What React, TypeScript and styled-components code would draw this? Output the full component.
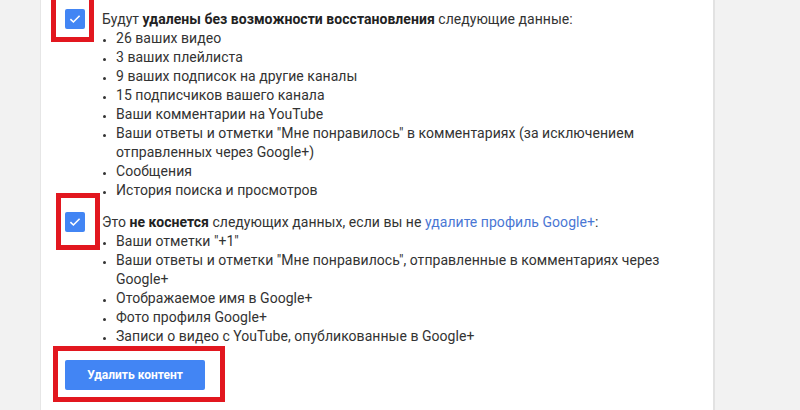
import React from "react";
import styled, { createGlobalStyle } from "styled-components";

const GlobalStyle = createGlobalStyle`
  html, body {
    margin: 0;
    padding: 0;
    background: #f2f2f2;
  }
  body {
    font-family: Roboto, "Noto Sans", Arial, sans-serif;
    overflow: hidden;
  }
`;

const Card = styled.div`
  margin-left: 40px;
  width: 675px;
  min-height: 410px;
  box-sizing: border-box;
  background: #ffffff;
  border-left: 1px solid #e6e6e6;
  border-right: 2px solid #e2e2e2;
  padding: 10px 25px 0 24px;
`;

const Section = styled.div<{ $gap?: number }>`
  display: flex;
  align-items: flex-start;
  gap: 17px;
  margin-top: ${(p) => p.$gap ?? 0}px;
`;

const CheckCell = styled.div`
  position: relative;
  flex: 0 0 20px;
  height: 20px;
  margin-top: -1px;
`;

const Checkbox = styled.div`
  width: 20px;
  height: 20px;
  border-radius: 2px;
  background: #4285f4;
  display: flex;
  align-items: center;
  justify-content: center;
`;

const Highlight = styled.div<{ $top: number; $left: number; $w: number; $h: number }>`
  position: absolute;
  top: ${(p) => p.$top}px;
  left: ${(p) => p.$left}px;
  width: ${(p) => p.$w}px;
  height: ${(p) => p.$h}px;
  box-sizing: border-box;
  border: 5px solid #e2171f;
  pointer-events: none;
`;

const Body = styled.div`
  flex: 1;
  font-size: 14px;
  line-height: 19px;
  letter-spacing: 0.04px;
  color: #333333;
`;

const Lead = styled.div`
  b {
    font-weight: 700;
    color: #222222;
  }
`;

const Link = styled.a`
  color: #4a77d4;
  text-decoration: none;
`;

const List = styled.ul`
  margin: 0;
  padding-left: 14px;
  list-style: disc;
  li::marker {
    font-size: 11px;
  }
`;

const ButtonWrap = styled.div`
  position: relative;
  margin-top: 14px;
  width: 140px;
`;

const Button = styled.button`
  width: 140px;
  height: 30px;
  border: none;
  border-radius: 2px;
  background: #4285f4;
  color: #ffffff;
  font-family: Roboto, Arial, sans-serif;
  font-size: 12px;
  font-weight: 700;
  cursor: pointer;
`;

const Check = () => (
  <Checkbox>
    <svg width="14" height="14" viewBox="0 0 14 14">
      <path d="M2.4 7.2 L5.4 10 L11.6 3.8" fill="none" stroke="#ffffff" strokeWidth="1.6" />
    </svg>
  </Checkbox>
);

const removed = [
  "26 ваших видео",
  "3 ваших плейлиста",
  "9 ваших подписок на другие каналы",
  "15 подписчиков вашего канала",
  "Ваши комментарии на YouTube",
  "Ваши ответы и отметки \"Мне понравилось\" в комментариях (за исключением отправленных через Google+)",
  "Сообщения",
  "История поиска и просмотров",
];

const kept = [
  "Ваши отметки \"+1\"",
  "Ваши ответы и отметки \"Мне понравилось\", отправленные в комментариях через Google+",
  "Отображаемое имя в Google+",
  "Фото профиля Google+",
  "Записи о видео с YouTube, опубликованные в Google+",
];

export default function App() {
  return (
    <>
      <GlobalStyle />
      <Card>
        <Section>
          <CheckCell>
            <Check />
            <Highlight $top={-30} $left={-14} $w={43} $h={63} />
          </CheckCell>
          <Body>
            <Lead>
              Будут <b>удалены без возможности восстановления</b> следующие данные:
            </Lead>
            <List>
              {removed.map((t) => (
                <li key={t}>{t}</li>
              ))}
            </List>
          </Body>
        </Section>
        <Section $gap={13}>
          <CheckCell>
            <Check />
            <Highlight $top={-19} $left={-9} $w={44} $h={57} />
          </CheckCell>
          <Body>
            <Lead>
              Это <b>не коснется</b> следующих данных, если вы не{" "}
              <Link href="#">удалите профиль Google+</Link>:
            </Lead>
            <List>
              {kept.map((t) => (
                <li key={t}>{t}</li>
              ))}
            </List>
          </Body>
        </Section>
        <ButtonWrap>
          <Button>Удалить контент</Button>
          <Highlight $top={-14} $left={-12} $w={172} $h={56} />
        </ButtonWrap>
      </Card>
    </>
  );
}
